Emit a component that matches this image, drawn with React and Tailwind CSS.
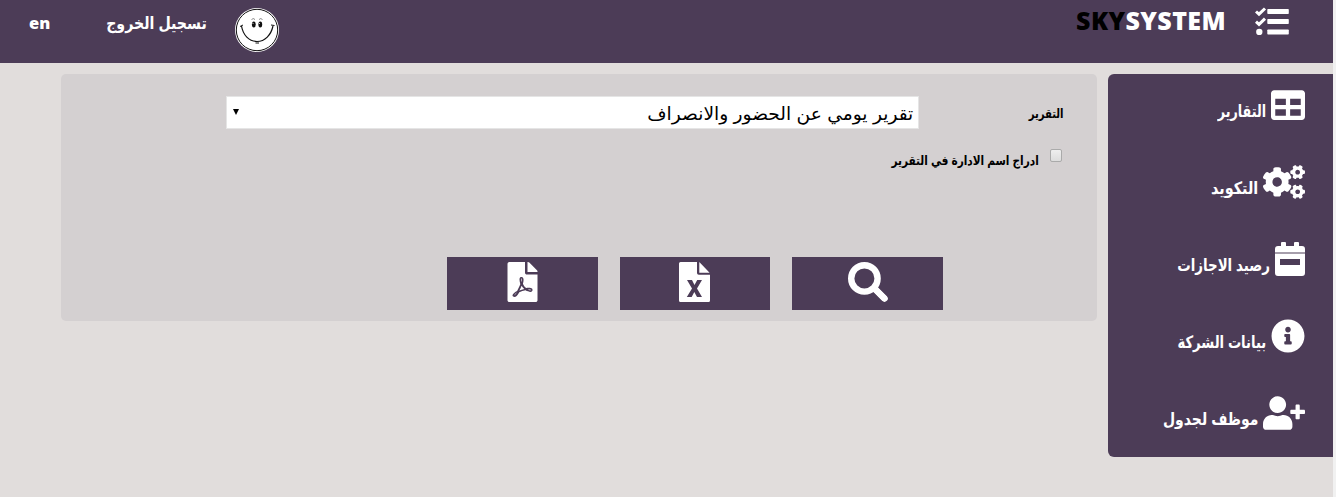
import React from 'react';
import { FaTable, FaCogs, FaInfoCircle, FaUserPlus, FaFilePdf } from 'react-icons/fa';

function TasksIcon({ className }) {
  return (
    <svg viewBox="0 0 34 28" className={className} fill="currentColor">
      <rect x="12.300" y="2" width="21.500" height="5" rx=".8" />
      <rect x="12.300" y="12" width="21.500" height="5" rx=".8" />
      <rect x="12.300" y="22.500" width="21.500" height="5" rx=".8" />
      <circle cx="4.300" cy="25" r="3.200" />
      <path d="M1 4.500 4 7.200 10 1.500M1 14.700 4 17.400 10 11.700" fill="none" stroke="currentColor" strokeWidth="3" />
    </svg>
  );
}

function ExcelIcon({ className }) {
  return (
    <svg viewBox="0 0 31 40" className={className} fill="currentColor">
      <path d="M1.500 0H18v11a1.800 1.800 0 0 0 1.800 1.800H31V38.500a1.500 1.500 0 0 1-1.500 1.500h-28A1.500 1.500 0 0 1 0 38.500v-37A1.500 1.500 0 0 1 1.500 0zM20.300 0l10.300 10.700H20.300z" />
      <path d="M8 18h5l2.500 5 2.700-5H23l-5 8.500 5 8.500h-5l-2.700-5-2.600 5H7.800l5.200-8.500z" fill="#4c3c57" />
    </svg>
  );
}

function SearchIcon({ className }) {
  return (
    <svg viewBox="0 0 40 40" className={className} fill="none" stroke="currentColor">
      <circle cx="16.400" cy="16.400" r="13.200" strokeWidth="6.400" />
      <path d="M26 26 36.800 36.800" strokeWidth="6" />
      <path d="M28 28 36.500 36.500" strokeWidth="6.600" strokeLinecap="round" />
    </svg>
  );
}

function CalendarIcon({ className }) {
  return (
    <svg viewBox="0 0 30 34" className={className} fill="currentColor">
      <path d="M0 10.500V7a3 3 0 0 1 3-3h3V1a1 1 0 0 1 1-1h3a1 1 0 0 1 1 1v3h8V1a1 1 0 0 1 1-1h3a1 1 0 0 1 1 1v3h3a3 3 0 0 1 3 3v3.500z" />
      <path fillRule="evenodd" d="M0 11.500h30V31a3 3 0 0 1-3 3H3a3 3 0 0 1-3-3zM5 17v6h20v-6z" />
    </svg>
  );
}

function Smiley() {
  return (
    <svg viewBox="0 0 44 44" className="h-11 w-11" fill="none" stroke="#111">
      <circle cx="22" cy="22" r="22" fill="#fff" stroke="none" />
      <circle cx="22" cy="22" r="20.700" strokeWidth="1" />
      <path d="M6.500 18c1.500 9 7.500 15.500 15.500 15.500S36 27 38 18" strokeWidth="1.200" />
      <path d="M5 18.500 8 17M36 17l3.500.500M20.500 35h3.500" strokeWidth="1" />
      <path d="M16.500 11.500q1.800-1.800 3.500 0M24 11.500q1.700-1.800 3.500 0" strokeWidth=".5" />
      <ellipse cx="18.800" cy="16.500" rx="1.900" ry="2.900" fill="#111" stroke="none" />
      <ellipse cx="25.300" cy="16.500" rx="1.900" ry="2.900" fill="#111" stroke="none" />
      <circle cx="18" cy="15.400" r=".5" fill="#fff" stroke="none" />
      <circle cx="24.500" cy="15.400" r=".5" fill="#fff" stroke="none" />
    </svg>
  );
}

function Label({ children, className, width }) {
  return (
    <span dir="rtl" className={`flex shrink-0 justify-start whitespace-nowrap ${width}`}>
      <span className={`block origin-right ${className}`}>{children}</span>
    </span>
  );
}

const menu = [
  { text: 'التقارير', scale: 'scale-x-[.83]', width: 'w-12', icon: <FaTable className="h-[34px] w-[34px]" /> },
  { text: 'التكويد', scale: 'scale-x-[.94]', width: 'w-12', icon: <FaCogs className="h-[34px] w-[42px]" /> },
  { text: 'رصيد الاجازات', scale: 'scale-x-[.875]', width: 'w-[92px]', icon: <CalendarIcon className="h-[34px] w-[30px]" /> },
  { text: 'بيانات الشركة', scale: 'scale-x-[.86]', width: 'w-[88px]', icon: <FaInfoCircle className="h-[34px] w-[34px]" /> },
  { text: 'موظف لجدول', scale: 'scale-x-[.915]', width: 'w-24', icon: <FaUserPlus className="h-[34px] w-[42px]" /> },
];

const actions = [
  { name: 'pdf', icon: <FaFilePdf className="h-10 w-[31px]" /> },
  { name: 'excel', icon: <ExcelIcon className="h-10 w-[31px]" /> },
  { name: 'search', icon: <SearchIcon className="h-10 w-10" /> },
];

export default function App() {
  return (
    <div className="flex h-[497px] w-[1336px] overflow-hidden bg-[#f1f1f1] font-['Open_Sans','DejaVu_Sans_Condensed','DejaVu_Sans',sans-serif]">
      <div className="flex w-[1333px] flex-col bg-[#e1dddc]">
        <header className="flex h-[63px] shrink-0 items-start justify-between bg-[#4c3c57] pl-[29px] pr-11 text-white">
          <div className="flex items-start">
            <span className="mt-[11px] w-[77px] text-[16.5px] font-extrabold leading-6">en</span>
            <Label width="w-[101px] mt-[11px]" className="scale-x-[.925] text-[17px] font-bold leading-6">تسجيل الخروج</Label>
            <div className="ml-7 mt-2"><Smiley /></div>
          </div>
          <div className="flex items-start">
            <h1 className="mt-[3px] text-[25px] font-extrabold leading-[34px] tracking-[.4px]"><span className="text-black">SKY</span>SYSTEM</h1>
            <TasksIcon className="ml-[29px] mt-[7px] h-7 w-[34px]" />
          </div>
        </header>
        <div className="mt-[11px] flex items-start pl-[61px]">
          <main className="h-[247px] w-[1036px] rounded-[5px] bg-[#d4d0d1]">
            <div className="flex items-start justify-end pr-[33px] pt-[22px]">
              <div className="flex h-[33px] w-[693px] items-center justify-between border border-[#e5e5e5] bg-white pl-[6px] pr-[5px] text-black">
                <svg viewBox="0 0 6 6" className="mb-[2px] h-[6px] w-[6px]"><path d="M0 0h6L3 6z" /></svg>
                <Label width="w-[268px]" className="scale-x-[1.15] text-[18px] leading-8">تقرير يومي عن الحضور والانصراف</Label>
              </div>
              <Label width="ml-[108px] mt-[5px] w-[37px]" className="scale-x-[.86] text-[13px] font-bold leading-6">التقرير</Label>
            </div>
            <div className="mt-5 flex items-start justify-end pr-[35px]">
              <Label width="mt-[-1px] w-[148px]" className="scale-x-[.9] text-[13px] font-bold leading-6">ادراج اسم الادارة في التقرير</Label>
              <input type="checkbox" className="ml-[11px] mt-0 h-[13px] w-3 appearance-none rounded-[2px] border border-[#aaa] bg-gradient-to-b from-[#eee] to-[#ddd]" />
            </div>
            <div className="mt-[85px] flex gap-[22px] pl-[386px]">
              {actions.map((a) => (
                <button key={a.name} className="flex h-[53px] w-[150.667px] justify-center bg-[#4c3c57] pt-[5px] text-white">{a.icon}</button>
              ))}
            </div>
          </main>
          <aside className="ml-[11px] h-[383px] w-[225px] rounded-l-[6px] bg-[#4c3c57] pr-7 pt-[14px] text-white">
            {menu.map((m) => (
              <div key={m.text} className="flex h-[77px] items-start justify-end">
                <Label width={`mr-[5px] mt-[11px] ${m.width}`} className={`${m.scale} text-[17px] font-bold leading-6`}>{m.text}</Label>
                {m.icon}
              </div>
            ))}
          </aside>
        </div>
      </div>
    </div>
  );
}
